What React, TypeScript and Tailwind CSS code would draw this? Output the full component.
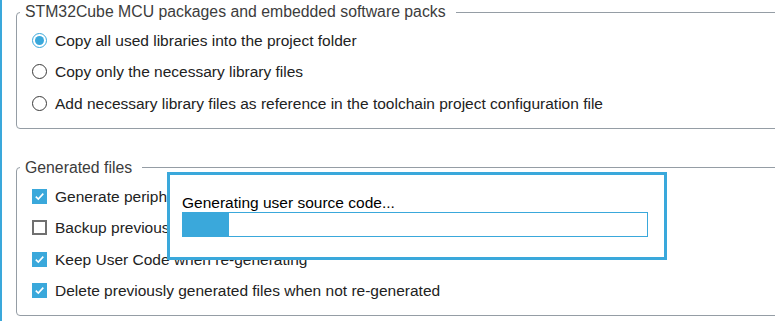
import React from 'react';

const font = { fontFamily: '"Liberation Sans", Arial, sans-serif' };

function Radio({ checked }: { checked?: boolean }) {
  return (
    <span
      className={`w-[15px] h-[15px] rounded-full border flex items-center justify-center shrink-0 ${
        checked ? 'border-[#3aa8db]' : 'border-[#3a3a3a]'
      }`}
    >
      {checked && <span className="w-[9px] h-[9px] rounded-full bg-[#3aa8db]" />}
    </span>
  );
}

function Checkbox({ checked }: { checked?: boolean }) {
  if (!checked) {
    return <span className="w-[15px] h-[15px] border-2 border-[#707070] bg-white shrink-0" />;
  }
  return (
    <span className="w-[15px] h-[15px] bg-[#3aa8db] flex items-center justify-center shrink-0">
      <svg width="11" height="11" viewBox="0 0 11 11">
        <path d="M1.8 5.6 L4.3 8.1 L9.3 2.6" fill="none" stroke="#fff" strokeWidth="1.6" />
      </svg>
    </span>
  );
}

function Row({ children, control }: { children: React.ReactNode; control: React.ReactNode }) {
  return (
    <div className="h-[31.3px] flex items-center gap-[8px] text-[15.5px] text-[#222]">
      {control}
      <span className="whitespace-nowrap">{children}</span>
    </div>
  );
}

function Group({ title, children, className }: { title: string; children: React.ReactNode; className?: string }) {
  return (
    <fieldset
      className={`ml-[16px] w-[800px] border border-[#959da5] rounded-[4px] p-0 pb-[9px] ${className ?? ''}`}
    >
      <legend className="ml-[3px] pl-[5px] pr-[10px] text-[15.8px] leading-[18px] text-[#3c3c3c]">
        {title}
      </legend>
      <div className="pl-[15px] pt-[4px]">{children}</div>
    </fieldset>
  );
}

export default function App() {
  return (
    <div
      className="relative w-[775px] h-[321px] overflow-hidden bg-white border-l-2 border-[#3aa8db]"
      style={font}
    >
      <div className="pt-[3px] -ml-[2px]">
        <Group title="STM32Cube MCU packages and embedded software packs">
          <Row control={<Radio checked />}>Copy all used libraries into the project folder</Row>
          <Row control={<Radio />}>Copy only the necessary library files</Row>
          <Row control={<Radio />}>
            Add necessary library files as reference in the toolchain project configuration file
          </Row>
        </Group>

        <Group title="Generated files" className="mt-[30px]">
          <Row control={<Checkbox checked />}>Generate peripheral initialization as a pair of '.c/.h' files per peripheral</Row>
          <Row control={<Checkbox />}>Backup previously generated files when re-generating</Row>
          <Row control={<Checkbox checked />}>Keep User Code when re-generating</Row>
          <Row control={<Checkbox checked />}>Delete previously generated files when not re-generated</Row>
        </Group>
      </div>

      <div className="absolute left-[165px] top-[172px] w-[500px] h-[88px] border-[3px] border-[#3aa8db] bg-white pl-[12px] pt-[19px]">
        <div className="text-[15.5px] leading-[18px] text-black">Generating user source code...</div>
        <div className="w-[466px] h-[25px] border border-[#3aa8db] bg-white">
          <div className="h-full w-[46px] bg-[#3aa8db]" />
        </div>
      </div>
    </div>
  );
}
